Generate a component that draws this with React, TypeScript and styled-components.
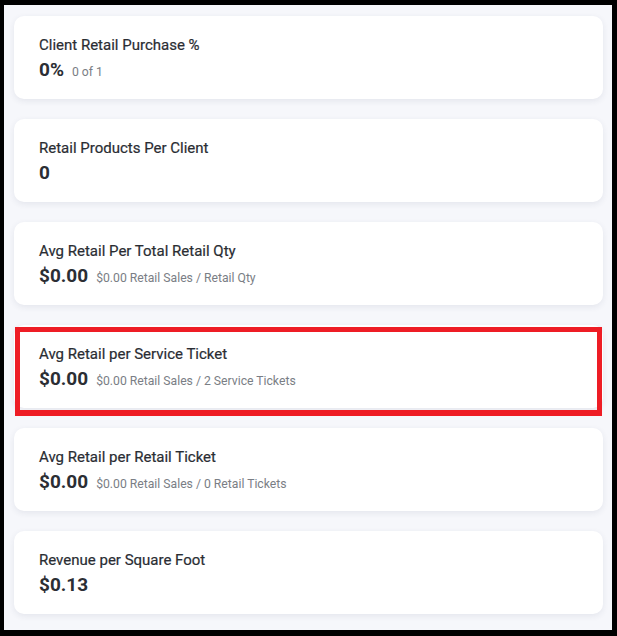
import React from "react";
import styled, { createGlobalStyle } from "styled-components";

const GlobalStyle = createGlobalStyle`
  html, body {
    margin: 0;
    padding: 0;
    background: #000;
  }
  body {
    font-family: Roboto, "Liberation Sans", Arial, sans-serif;
  }
`;

const Frame = styled.div`
  box-sizing: border-box;
  width: 617px;
  height: 636px;
  border-style: solid;
  border-color: #000;
  border-width: 5px 5px 6px 4px;
  background: #f6f7fb;
  padding: 11px 9px 0 10px;
  display: flex;
  flex-direction: column;
  gap: 20px;
  overflow: hidden;
`;

const Card = styled.section<{ $highlighted?: boolean }>`
  position: relative;
  box-sizing: border-box;
  height: 83px;
  background: #fff;
  border-radius: 10px;
  box-shadow: 0 2px 6px rgba(40, 50, 90, 0.09);
  padding: 19px 25px 0;
  display: flex;
  flex-direction: column;
  gap: 3px;

  ${({ $highlighted }) =>
    $highlighted &&
    `
    &::after {
      content: "";
      position: absolute;
      top: 2px;
      left: 1px;
      right: 1px;
      bottom: -8px;
      border: 5px solid #ee1d25;
      border-bottom-width: 6px;
      pointer-events: none;
    }
  `}
`;

const Title = styled.div`
  font-size: 15px;
  line-height: 20px;
  color: #2a2d33;
  font-weight: 400;
  -webkit-text-stroke: 0.2px #2a2d33;
`;

const ValueRow = styled.div`
  display: flex;
  align-items: baseline;
  gap: 8px;
`;

const Value = styled.span`
  font-size: 19px;
  line-height: 24px;
  font-weight: 700;
  color: #2b2e34;
`;

const Detail = styled.span`
  font-size: 12.2px;
  color: #7a7e85;
`;

type Metric = { title: string; value: string; detail?: string; highlighted?: boolean };

const metrics: Metric[] = [
  { title: "Client Retail Purchase %", value: "0%", detail: "0 of 1" },
  { title: "Retail Products Per Client", value: "0" },
  {
    title: "Avg Retail Per Total Retail Qty",
    value: "$0.00",
    detail: "$0.00 Retail Sales / Retail Qty",
  },
  {
    title: "Avg Retail per Service Ticket",
    value: "$0.00",
    detail: "$0.00 Retail Sales / 2 Service Tickets",
    highlighted: true,
  },
  {
    title: "Avg Retail per Retail Ticket",
    value: "$0.00",
    detail: "$0.00 Retail Sales / 0 Retail Tickets",
  },
  { title: "Revenue per Square Foot", value: "$0.13" },
];

export default function App() {
  return (
    <>
      <GlobalStyle />
      <Frame>
        {metrics.map((m) => (
          <Card key={m.title} $highlighted={m.highlighted}>
            <Title>{m.title}</Title>
            <ValueRow>
              <Value>{m.value}</Value>
              {m.detail && <Detail>{m.detail}</Detail>}
            </ValueRow>
          </Card>
        ))}
      </Frame>
    </>
  );
}
